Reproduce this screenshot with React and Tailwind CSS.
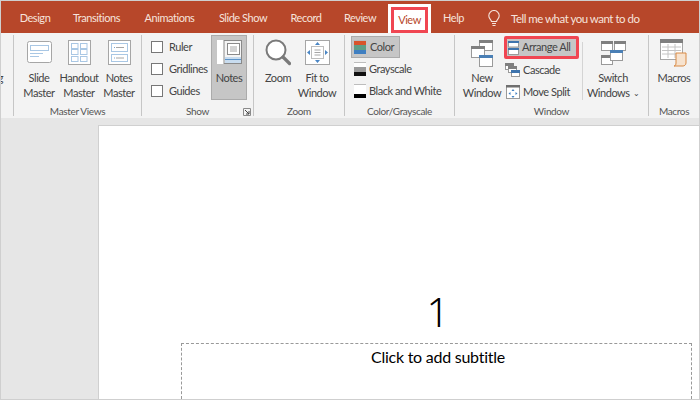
import React from "react";

const tabs = [
  ["Design", "w-[54px]"],
  ["Transitions", "w-[69px]"],
  ["Animations", "w-[77px]"],
  ["Slide Show", "w-[70px]"],
  ["Record", "w-[56px]"],
  ["Review", "w-[52px]"],
];

const Win = ({ x, y, w, h, bar = "#7f7f7f" }) => (
  <g>
    <rect x={x + 0.5} y={y + 0.5} width={w} height={h} fill="#fff" stroke="#9a9a9a" />
    <rect x={x} y={y} width={w + 1} height="3" fill={bar} />
  </g>
);

const SlideMasterIcon = () => (
  <svg width="25" height="23" viewBox="0 0 25 23">
    <rect x="0.5" y="0.5" width="24" height="21" rx="2" fill="#fff" stroke="#a6a6a6" />
    <rect x="3.5" y="4.5" width="18" height="5" fill="#fff" stroke="#a9c7e4" />
    <path d="M3 12.5h13M3 15.5h9" stroke="#a9c7e4" />
  </svg>
);

const HandoutIcon = () => (
  <svg width="23" height="25" viewBox="0 0 23 25">
    <rect x="0.5" y="0.5" width="22" height="24" fill="#fff" stroke="#a6a6a6" />
    {[3, 9, 16].map((y) => (
      <g key={y}>
        <rect x="3.5" y={y + 0.5} width="6.5" height="5" fill="#fff" stroke="#a9c7e4" />
        <rect x="12.5" y={y + 0.5} width="6.5" height="5" fill="#fff" stroke="#a9c7e4" />
      </g>
    ))}
  </svg>
);

const NotesMasterIcon = () => (
  <svg width="23" height="25" viewBox="0 0 23 25">
    <rect x="0.5" y="0.5" width="22" height="24" fill="#fff" stroke="#a6a6a6" />
    <rect x="3.5" y="3.5" width="16" height="8" fill="#fff" stroke="#a9c7e4" />
    <rect x="3.5" y="14.5" width="16" height="7" fill="#fff" stroke="#a9c7e4" />
    <path d="M8 7.5h8M8 18h8" stroke="#a6a6a6" />
    <path d="M6 7.5h1M6 18h1" stroke="#7aa7d2" />
  </svg>
);

const NotesIcon = () => (
  <svg width="25" height="24" viewBox="0 0 25 24">
    <rect width="25" height="24" fill="#fff" />
    <rect x="7" y="0.5" width="17.5" height="23" fill="#f5f5f5" stroke="#8a8a8a" />
    <rect x="10.5" y="3.5" width="12" height="11" fill="#fff" stroke="#8a8a8a" />
    <path d="M13 7h7M13 9h7M13 11h7" stroke="#a6a6a6" />
    <rect x="8" y="17" width="16" height="6" fill="#c8dcef" />
    <path d="M8 19.5h16" stroke="#5b93c9" />
  </svg>
);

const ZoomIcon = () => (
  <svg width="26" height="27" viewBox="0 0 26 27">
    <circle cx="11" cy="11" r="9.5" fill="#fff" stroke="#7a7a7a" strokeWidth="2" />
    <path d="M18 18l6.5 6.5" stroke="#7a7a7a" strokeWidth="3.2" strokeLinecap="round" />
  </svg>
);

const FitIcon = () => (
  <svg width="25" height="25" viewBox="0 0 25 25">
    <rect x="0.5" y="0.5" width="24" height="24" fill="#fff" stroke="#a6a6a6" />
    <rect x="6.5" y="6.5" width="12" height="12" fill="#fff" stroke="#bdbdbd" />
    <path d="M9.5 10h6M9.5 12.5h6M9.5 15h6" stroke="#a6a6a6" />
    <path d="M12.5 2l2.5 3h-5zM12.5 23l2.5-3h-5zM2 12.5l3-2.5v5zM23 12.5l-3-2.5v5z" fill="#4a86c5" />
  </svg>
);

const SwatchIcon = ({ colors }) => (
  <span className="flex w-[12px] h-[14px] flex-col border-t border-[#bdbdbd]">
    {colors.map((c, i) => (
      <span key={i} className="flex-1" style={{ backgroundColor: c }} />
    ))}
  </span>
);

const NewWindowIcon = () => (
  <svg width="24" height="28" viewBox="0 0 24 28">
    <Win x={9} y={1} w={13} h={10} />
    <Win x={1} y={7} w={13} h={11} />
    <Win x={9} y={16} w={13} h={11} bar="#4a7fb5" />
  </svg>
);

const ArrangeIcon = () => (
  <svg width="11" height="14" viewBox="0 0 11 14">
    <rect x="0.5" y="0.5" width="10" height="5.5" fill="#fff" stroke="#9a9a9a" />
    <rect x="0" y="0" width="11" height="2" fill="#3f74ad" />
    <rect x="0.5" y="7.5" width="10" height="6" fill="#fff" stroke="#9a9a9a" />
    <rect x="0" y="7" width="11" height="2" fill="#3f74ad" />
  </svg>
);

const CascadeIcon = () => (
  <svg width="15" height="14" viewBox="0 0 15 14">
    <Win x={0} y={0} w={8} h={6} />
    <Win x={3} y={3} w={8} h={6} />
    <Win x={6} y={7} w={8} h={6} bar="#3f74ad" />
  </svg>
);

const MoveSplitIcon = () => (
  <svg width="15" height="14" viewBox="0 0 15 14">
    <rect x="1.5" y="0.5" width="13" height="13" fill="#fff" stroke="#9a9a9a" />
    <rect x="1" y="0" width="14" height="2.5" fill="#6f6f6f" />
    <path d="M8 4l1.5 2h-3zM8 13l1.5-2h-3zM3.5 8.5l2-1.5v3zM12.5 8.5l-2-1.5v3z" fill="#3f7fc1" />
  </svg>
);

const SwitchIcon = () => (
  <svg width="26" height="25" viewBox="0 0 26 25">
    <Win x={1} y={1} w={11} h={9} />
    <Win x={14} y={1} w={11} h={9} />
    <Win x={1} y={15} w={11} h={9} />
    <Win x={10} y={10} w={12} h={10} bar="#4a7fb5" />
  </svg>
);

const MacrosIcon = () => (
  <svg width="28" height="28" viewBox="0 0 28 28">
    <rect x="0.5" y="0.5" width="22" height="20" fill="#fff" stroke="#a6a6a6" />
    <rect x="0" y="0" width="23" height="4" fill="#7f7f7f" />
    <path d="M2 8h19M2 11.5h19M2 15h19M8 5v14M15 5v14" stroke="#c4c4c4" />
    <path d="M16 14h10v10c0 2-2 3-3 3h-9c1.5 0 2-1.5 2-3z" fill="#f7e3cf" stroke="#d98a45" />
  </svg>
);

const BigButton = ({ icon, lines, className = "w-[39px]", chevron }) => (
  <div className={`flex flex-col items-center shrink-0 ${className}`}>
    <div className="h-[35px] flex items-center justify-center">{icon}</div>
    {lines.map((l, i) => (
      <div key={l} className="h-[15px] leading-[15px] whitespace-nowrap">
        {l}
        {chevron && i === 1 ? <span className="text-[8px] ml-[3px] align-[1px]">⌄</span> : null}
      </div>
    ))}
  </div>
);

const Group = ({ label, width, children, launcher }) => (
  <div className={`relative flex flex-col shrink-0 border-r border-[#c6c6c6] h-[81px] my-[2px] ${width}`}>
    <div className="flex flex-1 min-h-0">{children}</div>
    <div className="h-[9px] leading-[9px] text-center text-[10px] tracking-[-0.35px] text-[#555]">{label}</div>
    {launcher ? (
      <svg className="absolute right-[2px] bottom-0" width="8" height="8" viewBox="0 0 8 8">
        <path d="M0.5 0.5h7v7h-7z" fill="none" stroke="#8a8a8a" />
        <path d="M2 2l4 4M6 3v3H3" stroke="#444" fill="none" />
      </svg>
    ) : null}
  </div>
);

const CheckRow = ({ label }) => (
  <div className="h-[22px] flex items-center gap-[6px]">
    <span className="w-[12px] h-[12px] bg-white border border-[#777]" />
    <span>{label}</span>
  </div>
);

const SmallRow = ({ icon, label }) => (
  <div className="h-[22px] flex items-center gap-[3px] whitespace-nowrap">
    {icon}
    <span>{label}</span>
  </div>
);

export default function App() {
  return (
    <div className="w-[700px] h-[400px] overflow-hidden flex flex-col bg-[#e6e6e6] border border-[#cfcfcf] font-['Lato','Liberation_Sans',sans-serif] text-[11px] tracking-[-0.45px] text-[#444]">
      {/* tab strip */}
      <div className="h-[32px] shrink-0 bg-[#b7472a] flex items-end text-[#f6e3dc]">
        <div className="flex h-[29px] items-center pl-[7px]">
          {tabs.map(([t, w]) => (
            <div key={t} className={`text-center ${w}`}>{t}</div>
          ))}
        </div>
        <div className="h-[29px] w-[43px] ml-[2px] bg-white p-[3px] pb-0 flex">
          <div className="flex-1 border-[3px] border-[#f04652] flex items-center justify-center text-[#b7472a]">View</div>
        </div>
        <div className="h-[29px] flex items-center ml-[12px]">Help</div>
        <div className="h-[29px] flex items-center ml-[24px] gap-[11px] text-[11.5px] tracking-[-0.5px]">
          <svg width="12" height="17" viewBox="0 0 12 17" fill="none" stroke="#f6e3dc" strokeWidth="1.1">
            <path d="M3.5 11.5C3 9.5.8 8.5.8 5.7a5.2 5.2 0 0 1 10.4 0c0 2.8-2.2 3.8-2.7 5.8z" />
            <path d="M4 13.5h4M4.5 15.5h3" />
          </svg>
          <span>Tell me what you want to do</span>
        </div>
      </div>

      {/* ribbon */}
      <div className="h-[85px] shrink-0 bg-[#f3f3f3] flex items-start overflow-hidden">
        <Group width="w-[13px]" label="">
          <div className="w-full overflow-hidden flex justify-end pt-[35px] pr-[10px] leading-[15px]">
            <span>Reading</span>
          </div>
        </Group>

        <Group width="w-[128px]" label="Master Views">
          <div className="flex pl-[5px]">
            <BigButton icon={<SlideMasterIcon />} lines={["Slide", "Master"]} className="w-[40px]" />
            <BigButton icon={<HandoutIcon />} lines={["Handout", "Master"]} className="w-[40px]" />
            <BigButton icon={<NotesMasterIcon />} lines={["Notes", "Master"]} className="w-[40px]" />
          </div>
        </Group>

        <Group width="w-[112px]" label="Show" launcher>
          <div className="flex w-full pl-[9px] pt-[1px]">
            <div className="w-[60px]">
              <CheckRow label="Ruler" />
              <CheckRow label="Gridlines" />
              <CheckRow label="Guides" />
            </div>
            <div className="-mt-[1px] w-[36px] h-[65px] bg-[#c6c6c6] border border-[#ababab] flex flex-col items-center pt-[4px]">
              <NotesIcon />
              <div className="mt-[6px] leading-[15px]">Notes</div>
            </div>
          </div>
        </Group>

        <Group width="w-[91px]" label="Zoom">
          <div className="flex pl-[5px]">
            <BigButton icon={<ZoomIcon />} lines={["Zoom"]} className="w-[38px]" />
            <BigButton icon={<FitIcon />} lines={["Fit to", "Window"]} className="w-[40px]" />
          </div>
        </Group>

        <Group width="w-[110px]" label="Color/Grayscale">
          <div className="flex flex-col pl-[6px] pt-[1px]">
            <div className="h-[22px] w-[49px] bg-[#c6c6c6] border border-[#ababab] flex items-center gap-[4px] pl-[2px]">
              <SwatchIcon colors={["#d9542b", "#5f9e86", "#3f7fc1"]} />
              <span>Color</span>
            </div>
            <div className="pl-[3px]">
              <SmallRow icon={<SwatchIcon colors={["#ffffff", "#9a9a9a", "#111111"]} />} label="Grayscale" />
              <SmallRow icon={<SwatchIcon colors={["#ffffff", "#ffffff", "#000000"]} />} label="Black and White" />
            </div>
          </div>
        </Group>

        <Group width="w-[194px]" label="Window">
          <div className="flex w-full">
            <div className="w-[49px] pl-[5px]">
              <BigButton icon={<NewWindowIcon />} lines={["New", "Window"]} className="w-[44px]" />
            </div>
            <div className="w-[78px] pt-[1px]">
              <div className="h-[23px] w-[75px] border-[3px] border-[#f04652] bg-[#c6c6c6] flex items-center gap-[3px] pl-[1px] rounded-[2px] whitespace-nowrap">
                <ArrangeIcon />
                <span>Arrange All</span>
              </div>
              <div className="pl-[1px]">
                <SmallRow icon={<CascadeIcon />} label="Cascade" />
                <SmallRow icon={<MoveSplitIcon />} label="Move Split" />
              </div>
            </div>
            <div className="w-px h-[58px] mt-[7px] bg-[#d4d4d4]" />
            <BigButton icon={<SwitchIcon />} lines={["Switch", "Windows"]} className="w-[60px]" chevron />
          </div>
        </Group>

        <div className="flex flex-col h-[81px] my-[2px] w-[50px] shrink-0">
          <div className="flex flex-1 justify-center">
            <BigButton icon={<MacrosIcon />} lines={["Macros"]} className="w-[40px]" />
          </div>
          <div className="h-[9px] leading-[9px] text-center text-[10px] tracking-[-0.35px] text-[#555]">Macros</div>
        </div>
      </div>

      {/* slide area */}
      <div className="flex-1 min-h-0 pl-[97px] pt-[7px]">
        <div className="h-full bg-white border-t border-l border-[#d0d0d0] flex flex-col text-black">
          <div className="h-[217px] shrink-0 flex items-end justify-center pl-[78px] pb-[6px] text-[40px] leading-[50px] font-light tracking-normal font-['Noto_Sans',sans-serif]">
            1
          </div>
          <div className="ml-[82px] mr-[7px] flex-1 border border-dashed border-b-0 border-[#999] text-center text-[16px] tracking-[-0.25px] leading-[24px] pt-[1px] pl-[3px]">
            Click to add subtitle
          </div>
        </div>
      </div>
    </div>
  );
}
